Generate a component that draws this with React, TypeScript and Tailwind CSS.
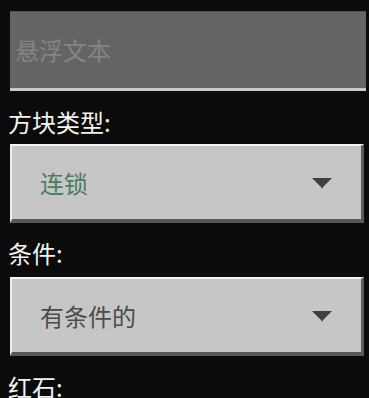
import React from 'react'

const font = { fontFamily: '"Noto Sans CJK SC", "Noto Sans", sans-serif' }

function Arrow() {
    return (
        <svg width="22" height="14" viewBox="0 0 22 14" className="shrink-0">
            <polygon points="1,2 21,2 12,11 11,13 10,11" fill="#3f3f3f" />
        </svg>
    )
}

function Select({ value, color }: { value: string; color: string }) {
    return (
        <div className="ml-[10px] mr-[5px] h-[79px] flex items-center justify-between bg-[#c6c6c6] border-t-2 border-l-2 border-t-[#f4f4f4] border-l-[#ededed] border-r-[3px] border-b-4 border-r-[#5c5c5c] border-b-[#595959] pl-[28px] pr-[28px]">
            <span className={`text-[24px] leading-none ${color}`}>{value}</span>
            <Arrow />
        </div>
    )
}

function Label({ text }: { text: string }) {
    return <div className="pl-[8px] text-[24px] leading-[32px] text-[#f2f2f2]">{text}</div>
}

export default function App() {
    return (
        <div style={font} className="w-[369px] h-[398px] overflow-hidden bg-[#0b0b0b] pt-[11px]">
            <div className="ml-[10px] mr-[3px] h-[80px] bg-[#646464] border-t border-t-[#555555] border-b-[3px] border-b-[#c9c9c9] flex items-center pl-[5px]">
                <span className="text-[24px] leading-none text-[#848484]">悬浮文本</span>
            </div>
            <div className="mt-[15px] mb-[6px]"><Label text="方块类型:" /></div>
            <Select value="连锁" color="text-[#4b7b60]" />
            <div className="mt-[14px] mb-[8px]"><Label text="条件:" /></div>
            <Select value="有条件的" color="text-[#4c4c4c]" />
            <div className="mt-[15px]"><Label text="红石:" /></div>
        </div>
    )
}
